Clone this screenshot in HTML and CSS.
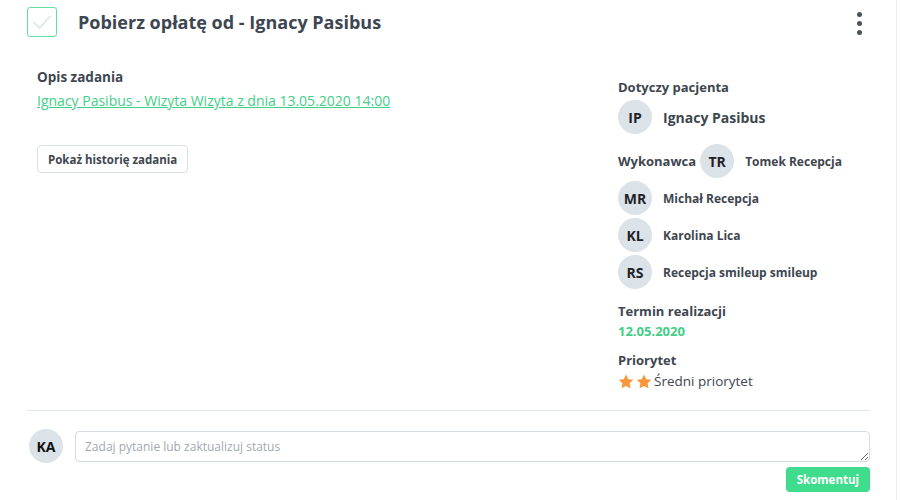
FILE: index.html
```html
<!DOCTYPE html>
<html lang="pl">
<head>
  <meta charset="UTF-8">
  <title>Zadanie</title>
  <meta name="viewport" content="width=device-width,initial-scale=1">
  <link rel="stylesheet" href="styles.css">
</head>
<body>
  <div class="task">
    <!-- Header -->
    <div class="task-head">
      <span class="check">
        <svg width="20" height="16" viewBox="0 0 20 16"><path d="M2 8.5l5.5 5.5L18 2.5" fill="none" stroke="#e6eaee" stroke-width="2.2" stroke-linecap="round" stroke-linejoin="round"/></svg>
      </span>
      <h1 class="title">Pobierz opłatę od - Ignacy Pasibus</h1>
      <span class="kebab"><i></i><i></i><i></i></span>
    </div>

    <div class="task-body">
      <div class="main">
        <h3 class="label">Opis zadania</h3>
        <a class="desc" href="#">Ignacy Pasibus - Wizyta Wizyta z dnia 13.05.2020 14:00</a>
        <button class="btn-history">Pokaż historię zadania</button>
      </div>

      <div class="side">
        <h3 class="label">Dotyczy pacjenta</h3>
        <div class="person patient">
          <span class="avatar">IP</span>
          <span class="name">Ignacy Pasibus</span>
        </div>

        <div class="person first">
          <h3 class="label inline">Wykonawca</h3>
          <span class="avatar">TR</span>
          <span class="name small">Tomek Recepcja</span>
        </div>
        <div class="person">
          <span class="avatar">MR</span>
          <span class="name small">Michał Recepcja</span>
        </div>
        <div class="person">
          <span class="avatar">KL</span>
          <span class="name small">Karolina Lica</span>
        </div>
        <div class="person">
          <span class="avatar">RS</span>
          <span class="name small">Recepcja smileup smileup</span>
        </div>

        <h3 class="label gap">Termin realizacji</h3>
        <div class="date">12.05.2020</div>

        <h3 class="label gap">Priorytet</h3>
        <div class="priority">
          <svg width="16" height="15" viewBox="0 0 24 23"><path d="M12 0.8l3.4 7.1 7.8 1-5.7 5.4 1.4 7.7L12 18.3 5.1 22l1.4-7.7L0.8 8.9l7.8-1z" fill="#f7963b"/></svg>
          <svg width="16" height="15" viewBox="0 0 24 23"><path d="M12 0.8l3.4 7.1 7.8 1-5.7 5.4 1.4 7.7L12 18.3 5.1 22l1.4-7.7L0.8 8.9l7.8-1z" fill="#f7963b"/></svg>
          <span>Średni priorytet</span>
        </div>
      </div>
    </div>

    <!-- Comment -->
    <div class="comment">
      <span class="avatar">KA</span>
      <textarea class="comment-input" placeholder="Zadaj pytanie lub zaktualizuj status"></textarea>
    </div>
    <div class="comment-actions">
      <button class="btn-send">Skomentuj</button>
    </div>
  </div>
</body>
</html>
```

FILE: styles.css
```css
:root {
  --text: #3e4650;
  --green: #40dc8e;
  --link: #3fcf86;
  --avatar: #dbe2e8;
  --line: #e3e8ed;
}
* { box-sizing: border-box; margin: 0; padding: 0; }
body {
  font-family: "Open Sans", "DejaVu Sans", sans-serif;
  color: var(--text); background: #fff;
}
.task {
  width: 897px; height: 500px;
  border-right: 1px solid #e8ebee;
  padding: 7px 26px 0 27px;
}
.task-head {
  display: flex; align-items: center; height: 30px;
}
.check {
  width: 30px; height: 30px; border: 1.5px solid #5fe0a0;
  border-radius: 3px; display: flex; align-items: center; justify-content: center;
}
.title {
  font-size: 18px; font-weight: 700; margin-left: 21px; flex: 1;
  color: #3d4651;
}
.kebab {
  display: flex; flex-direction: column; gap: 4px; margin-right: 8px; margin-top: 3px;
}
.kebab i {
  width: 5px; height: 5px; border-radius: 50%; background: #4a535c; display: block;
}
.task-body {
  display: flex; padding-left: 10px; height: 373px;
}
.main { flex: 1; padding-top: 31px; }
.label { font-size: 13px; font-weight: 700; line-height: 18px; }
.main .label { font-size: 13.5px; }
.desc {
  display: block; margin-top: 6px; color: var(--link);
  font-size: 14px; line-height: 18px;
}
.btn-history {
  margin-top: 35px; font: inherit; font-size: 11.5px; font-weight: 700;
  color: var(--text); background: #fff; border: 1px solid #d9dee3;
  border-radius: 4px; padding: 0 10px; height: 28px;
}
.side { width: 252px; padding-top: 41px; }
.person { display: flex; align-items: center; gap: 11px; margin-top: 3px; }
.patient { margin-top: 4px; }
.person.first { margin-top: 10px; gap: 0; }
.person.first .avatar { margin-left: 4px; margin-right: 11px; }
.avatar {
  width: 34px; height: 34px; border-radius: 50%; background: var(--avatar);
  display: flex; align-items: center; justify-content: center;
  font-size: 14px; font-weight: 700; color: #1f2328; flex-shrink: 0;
}
.name { font-size: 14px; font-weight: 700; }
.name.small { font-size: 12px; }
.label.gap { margin-top: 13px; }
.date {
  color: var(--link); font-weight: 700; font-size: 13px; line-height: 18px; margin-top: 2px;
}
.date + .label.gap { margin-top: 11px; }
.priority {
  display: flex; align-items: center; gap: 2px; margin-top: 3px; font-size: 13.5px;
}
.comment {
  border-top: 1.5px solid var(--line);
  display: flex; align-items: center; gap: 12px; padding-top: 18px;
}
.comment .avatar { margin-left: 2px; color: #111; }
.comment-input {
  flex: 1; height: 31px; border: 1px solid #d3dae1; border-radius: 4px;
  padding: 6px 9px; font: inherit; font-size: 12px; resize: vertical; display: block;
}
.comment-input::placeholder { color: #a3a9b0; }
.comment-actions { display: flex; justify-content: flex-end; margin-top: 4px; }
.btn-send {
  height: 25px; padding: 0 11px; border: none; border-radius: 4px;
  background: var(--green); color: #fff; font: inherit; font-size: 11.5px; font-weight: 700;
}
```
